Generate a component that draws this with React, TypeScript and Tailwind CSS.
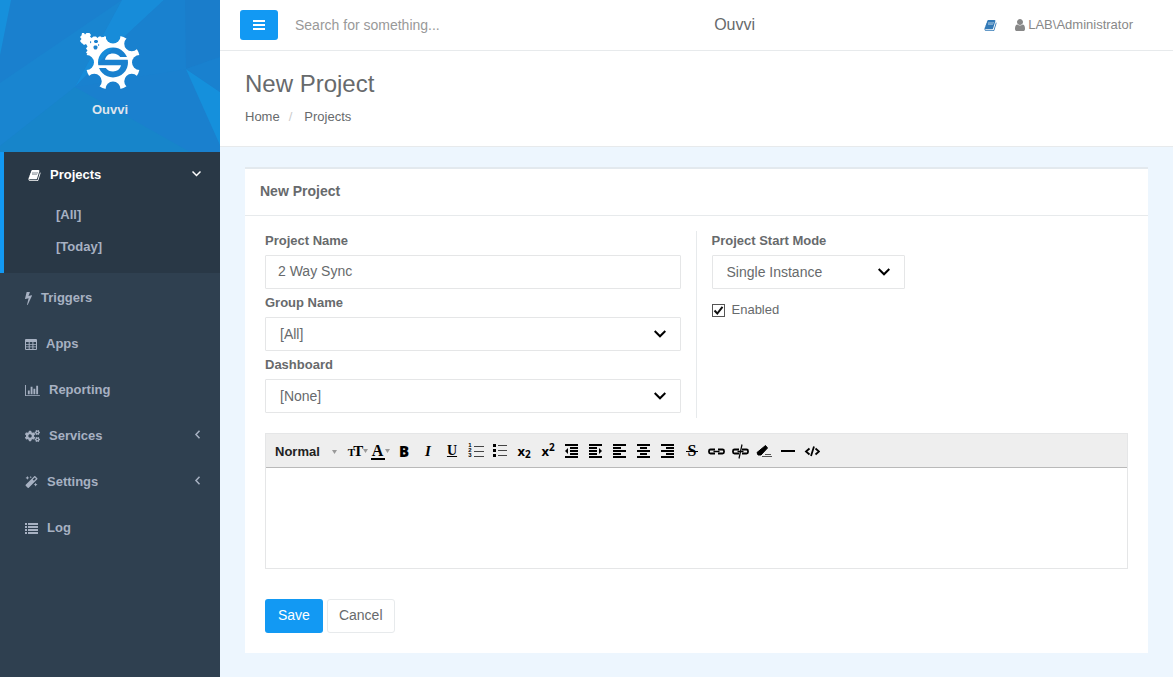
import React, { useState } from "react";
import { FaCogs, FaMagic } from "react-icons/fa";

const BookIcon = () => (
  <svg viewBox="0 0 1792 1792" width="13" height="13" fill="currentColor" aria-hidden="true">
    <path d="M1703 478q40 57 18 129l-275 906q-19 64-76.5 107.5t-122.5 43.5h-923q-77 0-148.5-53.5t-99.5-131.5q-24-67-2-127 0-4 3-27t4-37q1-8-3-21.5t-3-19.5q2-11 8-21t16.5-23.5 16.5-23.5q23-38 45-91.5t30-91.5q3-10 .5-30t-.5-28q3-11 17-28t17-23q21-36 42-92t25-90q1-9-2.5-32t.5-28q4-13 22-30.5t22-22.5q19-26 42.5-84.5t27.5-96.5q1-8-3-25.5t-2-26.5q2-8 9-18t18-23 17-21q8-12 16.5-30.5t15-35 16-36 19.5-32 26.5-23.5 36-11.5 47.5 5.5l-1 3q38-9 51-9h761q74 0 114 56t18 130l-274 906q-36 119-71.5 153.5t-128.5 34.5h-869q-27 0-38 15-11 16-1 43 24 70 144 70h923q29 0 56-15.5t35-41.5l300-987q7-22 5-57 38 15 59 43zM660 400l-120 400h680l120-400z" />
    <path d="M660 400l-120 400h680l120-400z" opacity="0.7" />
  </svg>
);

const BoltIcon = () => (
  <svg viewBox="448 0 896 1792" width="7" height="14" fill="currentColor" aria-hidden="true">
    <path d="M1333 566q18 20 7 44l-540 1157q-13 25-42 25-4 0-14-2-17-5-25.5-19t-4.5-30l197-808-406 101q-4 1-12 1-18 0-31-11-18-15-13-39l201-825q4-14 16-23t28-9h328q19 0 32 12.5t13 29.5q0 8-5 18l-171 463 396-98q8-2 12-2 19 0 34 15z" />
  </svg>
);

const TableIcon = () => (
  <svg viewBox="0 0 12 13" width="12" height="13" aria-hidden="true">
    <path
      fill="currentColor"
      fillRule="evenodd"
      d="M1 1h10a1 1 0 0 1 1 1v9a1 1 0 0 1-1 1H1a1 1 0 0 1-1-1V2a1 1 0 0 1 1-1zM1 4v2h2.700V4zm3.700 0v2h2.700V4zm3.700 0v2H11V4zM1 6.800v1.700h2.700V6.800zm3.700 0v1.700h2.700V6.800zm3.700 0v1.700H11V6.800zM1 9.300V11h2.700V9.300zm3.700 0V11h2.700V9.300zm3.700 0V11H11V9.300z"
    />
  </svg>
);

const ChartIcon = () => (
  <svg viewBox="0 0 2048 1792" width="15" height="13" fill="currentColor" aria-hidden="true">
    <path d="M640 896v512h-256v-512h256zm384-512v1024h-256v-1024h256zm1024 1152v128h-2048v-1536h128v1408h1920zm-640-896v768h-256v-768h256zm384-384v1152h-256v-1152h256z" />
  </svg>
);

const ListIcon = () => (
  <svg viewBox="0 0 13 13" width="13" height="13" fill="currentColor" aria-hidden="true">
    <path d="M0 1h2v2H0zM3 1h10v2H3zM0 4h2v2H0zM3 4h10v2H3zM0 7h2v2H0zM3 7h10v2H3zM0 10h2v2H0zM3 10h10v2H3z" />
  </svg>
);

const UserIcon = () => (
  <svg viewBox="256 128 1280 1536" width="10" height="12" fill="currentColor" aria-hidden="true">
    <path d="M1536 1399q0 109-62.500 187t-150.500 78h-854q-88 0-150.500-78t-62.500-187q0-85 8.500-160.500t31.500-152 58.500-131 94-89 134.500-34.500q131 128 313 128t313-128q76 0 134.500 34.500t94 89 58.500 131 31.500 152 8.500 160.500zm-256-887q0 159-112.500 271.500t-271.500 112.500-271.500-112.500-112.500-271.500 112.500-271.500 271.500-112.500 271.500 112.500 112.500 271.500z" />
  </svg>
);

const Logo = () => (
  <svg viewBox="80 32 61 60" width="61" height="60" aria-hidden="true">
    <mask id="gear">
      <rect x="80" y="32" width="61" height="60" fill="white" />
      {[0, 45, 90, 135, 180, 270, 315].map((angle) => (
        <circle key={angle} cx="139.500" cy="62.500" r="7.500" fill="black" transform={`rotate(${angle} 113 62.500)`} />
      ))}
      <path d="M84 32h20v5h-5v12h-7v5h-8z" fill="black" />
      <circle cx="113" cy="62.500" r="15" fill="black" />
    </mask>
    <circle cx="113" cy="62.500" r="27.500" fill="white" mask="url(#gear)" />
    <path
      fill="white"
      d="M105 59.700C106 55.500 109 53.500 113 53.500c3 0 5.500 1.300 7.200 3.600H128.500v2.600zM121 65.300c-1 4.200-4 6.200-8 6.200-3 0-5.500-1.300-7.200-3.600H97.500v-2.600z"
    />
    <path
      fill="white"
      d="M82 33h2l1 1.500L86.500 33h3l1.500 2-1 1.500 1.500 1.500 2-1.500h2.500l1.500 1.500 1.500-1.500h2l1.500 2 1.500-1.500h2v6h-7v7h-7v4.500h-4l-2-2 1.500-2-1.500-2 1.500-2-1.500-2.500-2 1-1.500-1.500v-2L86 41l-1.500 2.500H82L80 41l1.500-2-1.500-2 1.500-1.500z"
    />
    <path fill="#1b82cf" d="M94 41l1-1h2l1 1v1l-1 1h-2l-1-1zM93.500 46.500l1-1h2l1 1v1.500l-1 1.500h-2l-1-1.500zM90 41l1.500 1L90 43.500zM98 44l1.500 1-1.500 1z" />
  </svg>
);

const Chevron = ({ open }: { open?: boolean }) => (
  <svg viewBox="0 0 9 9" width="9" height="9" fill="none" stroke="currentColor" strokeWidth="1.500" className="mb-[3px]" aria-hidden="true">
    <path d={open ? "M.5 2.500l4 4 4-4" : "M6.500 .8L3 4.500l3.500 3.700"} />
  </svg>
);

const navItems = [
  { label: "Triggers", icon: <BoltIcon /> },
  { label: "Apps", icon: <TableIcon /> },
  { label: "Reporting", icon: <ChartIcon /> },
  { label: "Services", icon: <FaCogs className="w-[15px] h-3" />, nested: true },
  { label: "Settings", icon: <FaMagic className="w-[13px] h-3" />, nested: true },
  { label: "Log", icon: <ListIcon /> },
];

const Sidebar = () => (
  <aside className="w-[220px] shrink-0 bg-[#2f4050] text-[#a7b1c2] text-[13px] leading-5 font-bold">
    <div className="relative h-[152px] overflow-hidden bg-[#1a80ce]">
      <svg viewBox="0 0 220 152" preserveAspectRatio="none" className="absolute inset-0 w-full h-full" aria-hidden="true">
        <path d="M122 0L75 87 0 146V83z" fill="#1985d0" />
        <path d="M11 0L0 55V0z" fill="#1690dc" />
        <path d="M122 0h42l-41 38-48 49z" fill="#178cd9" />
        <path d="M164 0l-41 38-48 49 111-18V0z" fill="#1981cf" />
        <path d="M186 69l34-12V0h-35z" fill="#1a7dcb" />
        <path d="M186 69l34 23v53z" fill="#1590dc" />
        <path d="M186 69l34-12v35z" fill="#1981cf" />
        <path d="M0 146l75-59 115 65H0z" fill="#1785ca" />
      </svg>
      <div className="relative flex flex-col items-center pt-8">
        <Logo />
        <span className="mt-2 text-[#dfe4ed]">Ouvvi</span>
      </div>
    </div>
    <nav>
      <div className="border-l-4 border-[#1299f3] bg-[#293846] pb-[10px]">
        <a href="#projects" className="flex items-center h-[46px] pl-6 pr-[19px] text-white">
          <BookIcon />
          <span className="ml-[9px] mr-auto">Projects</span>
          <Chevron open />
        </a>
        <div className="pt-px">
          <a href="#all" className="flex items-center h-8 pl-[52px]">
            [All]
          </a>
          <a href="#today" className="flex items-center h-8 pl-[52px]">
            [Today]
          </a>
        </div>
      </div>
      <div className="pt-0.5">
        {navItems.map((item) => (
          <a key={item.label} href={"#" + item.label.toLowerCase()} className="flex items-center h-[46px] pl-[25px] pr-[18px]">
            {item.icon}
            <span className="ml-[9px] mr-auto">{item.label}</span>
            {item.nested && <Chevron />}
          </a>
        ))}
      </div>
    </nav>
  </aside>
);

const TopBar = () => (
  <header className="flex items-center justify-between h-[51px] pl-5 pr-10 bg-white border-b border-[#e7eaec]">
    <div className="flex items-center">
      <button type="button" aria-label="Toggle menu" className="flex items-center justify-center w-[38px] h-[30px] rounded-[3px] bg-[#1299f3]">
        <svg viewBox="0 0 12 10" width="12" height="10" fill="white" aria-hidden="true">
          <path d="M0 0h12v2H0zM0 4h12v2H0zM0 8h12v2H0z" />
        </svg>
      </button>
      <input
        type="text"
        aria-label="Search"
        placeholder="Search for something..."
        className="w-[207px] pl-[17px] text-sm placeholder:text-[#999999] outline-none"
      />
    </div>
    <span className="text-base">Ouvvi</span>
    <div className="flex items-center text-[13px] text-[#888888]">
      <a href="#docs" aria-label="Documentation" className="text-[#337ab7]">
        <BookIcon />
      </a>
      <a href="#account" className="flex items-center gap-[3px] ml-[18px]">
        <UserIcon />
        LAB\Administrator
      </a>
    </div>
  </header>
);

type SelectProps = { id: string; options: string[] };

const SelectField = ({ id, options }: SelectProps) => (
  <div className="relative">
    <select id={id} className="appearance-none block w-full h-[34px] pl-[14px] pr-8 text-sm bg-white border border-[#e5e6e7] rounded-[1px] outline-none">
      {options.map((option) => (
        <option key={option}>{option}</option>
      ))}
    </select>
    <svg
      viewBox="0 0 12 8"
      className="absolute right-[15px] top-[13px] w-3 h-2 pointer-events-none"
      fill="none"
      stroke="black"
      strokeWidth="2"
      aria-hidden="true"
    >
      <path d="M.7 1L6 6.300 11.300 1" />
    </svg>
  </div>
);

const labelStyle = "block text-[13px] leading-5 font-bold mb-1";

const Caret = () => (
  <svg viewBox="0 0 5 4" width="5" height="4" fill="#999999" aria-hidden="true">
    <path d="M0 0h5L2.500 4z" />
  </svg>
);

const lines = (d: string, extra?: React.ReactNode) => (
  <svg viewBox="0 0 16 16" width="16" height="16" fill="none" stroke="currentColor" aria-hidden="true">
    <path d={d} strokeWidth="2" />
    {extra}
  </svg>
);

const chain = (
  <>
    <path d="M8 6.500H3.500a1.500 1.500 0 0 0-1.500 1.500v1a1.500 1.500 0 0 0 1.500 1.500H8M11 6.500h4.500a1.500 1.500 0 0 1 1.500 1.500v1a1.500 1.500 0 0 1-1.500 1.500H11" strokeWidth="1.800" />
    <path d="M6.500 8.500h6" strokeWidth="1.500" />
  </>
);

const tools = [
  {
    name: "Font size",
    icon: (
      <span className="flex items-center pl-1">
        <span className="font-['Liberation_Serif',serif] font-bold text-[11px] leading-4 pt-[3px]">T</span>
        <span className="font-['Liberation_Serif',serif] font-bold text-[15px] leading-4 -ml-0.5">T</span>
        <Caret />
      </span>
    ),
  },
  {
    name: "Text color",
    icon: (
      <span className="flex items-center">
        <span className="w-[14px] mt-0.5 border-b-2 border-black font-['Liberation_Serif',serif] font-bold text-base leading-[14px] text-center">A</span>
        <Caret />
      </span>
    ),
  },
  { name: "Bold", icon: <span className="font-['Open_Sans',sans-serif] font-extrabold text-[15px] leading-4">B</span> },
  { name: "Italic", icon: <span className="font-['Liberation_Serif',serif] font-bold italic text-[15px] leading-4">I</span> },
  { name: "Underline", icon: <span className="font-['Liberation_Serif',serif] font-bold underline text-sm leading-4">U</span> },
  {
    name: "Ordered list",
    icon: (
      <span className="flex items-center gap-0.5">
        <span className="flex flex-col text-[6px] leading-[5px] font-bold">
          <span>1</span>
          <span>2</span>
          <span>3</span>
        </span>
        <svg viewBox="0 0 10 14" width="10" height="14" stroke="#444444" aria-hidden="true">
          <path d="M0 2.500h10M0 7.500h10M0 12.500h10" />
        </svg>
      </span>
    ),
  },
  {
    name: "Bullet list",
    icon: (
      <svg viewBox="0 0 16 16" width="16" height="16" aria-hidden="true">
        <path d="M1 1h3v3H1zM1 6h3v3H1zM1 11h3v3H1z" />
        <path d="M6 2.500h9M6 7.500h9M6 12.500h9" stroke="#444444" />
      </svg>
    ),
  },
  {
    name: "Subscript",
    icon: (
      <span className="font-['Open_Sans',sans-serif] font-bold text-[13px] leading-4">
        x<sub className="text-[10px]">2</sub>
      </span>
    ),
  },
  {
    name: "Superscript",
    icon: (
      <span className="font-['Open_Sans',sans-serif] font-bold text-[13px] leading-4">
        x<sup className="text-[10px]">2</sup>
      </span>
    ),
  },
  { name: "Outdent", icon: lines("M1 2h13M6 5h8M6 8h8M6 11h8M1 14h13", <path d="M4 5v6L1 8z" fill="currentColor" stroke="none" />) },
  { name: "Indent", icon: lines("M1 2h13M1 5h8M1 8h8M1 11h8M1 14h13", <path d="M11 5v6l3-3z" fill="currentColor" stroke="none" />) },
  { name: "Align left", icon: lines("M1 2h13M1 5h8M1 8h13M1 11h8M1 14h13") },
  { name: "Align center", icon: lines("M1 2h13M4 5h7M1 8h13M4 11h7M1 14h13") },
  { name: "Align right", icon: lines("M1 2h13M6 5h8M1 8h13M6 11h8M1 14h13") },
  {
    name: "Strikethrough",
    icon: (
      <span className="relative font-['Liberation_Serif',serif] font-bold text-base leading-4">
        S
        <span className="absolute -inset-x-0.5 top-2 border-t border-black" />
      </span>
    ),
  },
  {
    name: "Insert link",
    icon: (
      <svg viewBox="0 0 19 16" width="19" height="16" fill="none" stroke="currentColor" className="shrink-0" aria-hidden="true">
        {chain}
      </svg>
    ),
  },
  {
    name: "Remove link",
    icon: (
      <svg viewBox="0 0 19 16" width="19" height="16" fill="none" stroke="currentColor" className="shrink-0" aria-hidden="true">
        {chain}
        <path d="M11 1.500L8 15.500" strokeWidth="1.200" />
      </svg>
    ),
  },
  {
    name: "Clear formatting",
    icon: (
      <svg viewBox="0 0 16 16" width="16" height="16" aria-hidden="true">
        <path d="M9.500 2.500l2 2.500L5 12H2L1 9.500z" strokeLinejoin="round" stroke="black" />
        <path d="M9 11.500h6M6 13.500h10" stroke="#555555" />
      </svg>
    ),
  },
  { name: "Horizontal rule", icon: lines("M1 8h14") },
  {
    name: "View source",
    icon: (
      <svg viewBox="0 0 16 16" width="16" height="16" fill="none" stroke="currentColor" strokeWidth="1.800" aria-hidden="true">
        <path d="M5.500 5.500L2 8.500l3.500 3M11.500 5.500L15 8.500l-3.500 3M10 3.500L7 13" />
      </svg>
    ),
  },
];

const Editor = () => {
  const [text, setText] = useState("");

  return (
    <div className="mt-[15px] border border-[#e5e6e7]">
      <div className="flex items-center h-[34px] pl-[9px] bg-[#eeeeee] border-b border-[#b9b9b9] text-black">
        <div className="relative w-[69px]">
          <select aria-label="Paragraph format" className="appearance-none block w-[60px] h-6 pt-0.5 text-[13px] font-bold text-[#222222] outline-none">
            <option>Normal</option>
            <option>Heading</option>
          </select>
          <span className="absolute right-[7px] top-[11px] pointer-events-none">
            <Caret />
          </span>
        </div>
        {tools.map((tool) => (
          <button key={tool.name} type="button" aria-label={tool.name} className="flex items-center justify-center w-6 h-6 cursor-pointer">
            {tool.icon}
          </button>
        ))}
      </div>
      <textarea
        aria-label="Description"
        value={text}
        onChange={(e) => setText(e.target.value)}
        className="block w-full h-[100px] p-2 text-sm resize-none outline-none"
      />
    </div>
  );
};

const ProjectForm = () => {
  const [name, setName] = useState("2 Way Sync");
  const [enabled, setEnabled] = useState(true);

  return (
    <form className="px-5 pt-[15px] pb-5" onSubmit={(e) => e.preventDefault()}>
      <div className="grid grid-cols-2">
        <div className="flex flex-col gap-1 pr-[15px] pb-[5px] border-r border-[#e7eaec]">
          <div>
            <label htmlFor="name" className={labelStyle}>
              Project Name
            </label>
            <input
              id="name"
              type="text"
              value={name}
              onChange={(e) => setName(e.target.value)}
              className="block w-full h-[34px] px-3 pb-0.5 text-sm border border-[#e5e6e7] rounded-[1px] outline-none"
            />
          </div>
          <div>
            <label htmlFor="group" className={labelStyle}>
              Group Name
            </label>
            <SelectField id="group" options={["[All]"]} />
          </div>
          <div>
            <label htmlFor="dashboard" className={labelStyle}>
              Dashboard
            </label>
            <SelectField id="dashboard" options={["[None]"]} />
          </div>
        </div>
        <div className="pl-[15px]">
          <label htmlFor="mode" className={labelStyle}>
            Project Start Mode
          </label>
          <div className="w-[193px]">
            <SelectField id="mode" options={["Single Instance"]} />
          </div>
          <div className="flex items-center mt-[11px] text-[13px] leading-5">
            <span className="relative flex">
              <input
                id="enabled"
                type="checkbox"
                checked={enabled}
                onChange={() => setEnabled(!enabled)}
                className="appearance-none w-[13px] h-[13px] bg-white border border-[#555555]"
              />
              {enabled && (
                <svg viewBox="0 0 13 13" className="absolute inset-0 w-[13px] h-[13px] pointer-events-none" fill="none" stroke="#111111" strokeWidth="2" aria-hidden="true">
                  <path d="M2.500 6.500L5.300 9.500 10.500 2.800" />
                </svg>
              )}
            </span>
            <label htmlFor="enabled" className="pl-[7px]">
              Enabled
            </label>
          </div>
        </div>
      </div>
      <Editor />
      <div className="flex gap-1 mt-[30px] text-sm">
        <button type="submit" className="h-[34px] px-[13px] pb-0.5 rounded-[3px] bg-[#1299f3] text-white cursor-pointer">
          Save
        </button>
        <button type="button" className="h-[34px] px-[11px] pb-0.5 rounded-[3px] bg-white border border-[#e7eaec] cursor-pointer">
          Cancel
        </button>
      </div>
    </form>
  );
};

const App = () => {
  return (
    <div className="flex min-h-screen bg-[#edf6fe] text-[#676a6c] font-['Liberation_Sans',Arial,sans-serif]">
      <Sidebar />
      <div className="flex-1 min-w-0">
        <TopBar />
        <div className="px-[25px] pt-5 pb-[19px] bg-white border-b border-[#e7eaec]">
          <h1 className="text-2xl leading-[26px]">New Project</h1>
          <div className="flex mt-[10px] text-[13px] leading-5">
            <a href="#home">Home</a>
            <span className="pl-[9px] pr-3 text-[#cccccc]">/</span>
            <a href="#projects">Projects</a>
          </div>
        </div>
        <main className="px-[25px] py-5">
          <section className="bg-white border-t-2 border-[#e3e9ee]">
            <h2 className="px-[15px] pt-3 pb-[14px] text-sm font-bold border-b border-[#e7eaec]">New Project</h2>
            <ProjectForm />
          </section>
        </main>
      </div>
    </div>
  );
};

export default App;
